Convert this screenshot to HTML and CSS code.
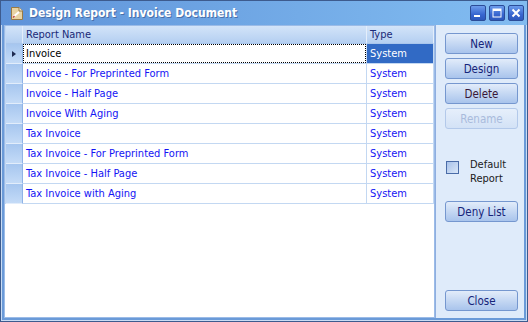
FILE: index.html
```html
<!DOCTYPE html>
<html>
<head>
<meta charset="utf-8">
<link rel="stylesheet" href="styles.css">
</head>
<body>
<div class="window">
  <div class="titlebar">
    <svg class="appicon" width="14" height="15" viewBox="0 0 14 15">
      <path d="M1.5 1.5 H9 L12.5 5 V13.5 H1.5 Z" fill="#e8d3a4" stroke="#9a7a44"/>
      <path d="M9 1.5 V5 H12.5" fill="#f6ead0" stroke="#9a7a44"/>
      <path d="M3 11 L9 6" stroke="#ffffff" stroke-width="2"/>
      <path d="M3 11.5 L4.5 10" stroke="#c04040" stroke-width="1.5"/>
    </svg>
    <span class="title">Design Report - Invoice Document</span>
    <div class="wbtns">
      <div class="wbtn"><svg width="16" height="16" viewBox="0 0 16 16"><rect x="4" y="10" width="6" height="2" fill="#fff"/></svg></div>
      <div class="wbtn"><svg width="16" height="16" viewBox="0 0 16 16"><rect x="4" y="4" width="8" height="8" fill="none" stroke="#fff" stroke-width="1"/><rect x="4" y="4" width="8" height="2" fill="#fff"/></svg></div>
      <div class="wbtn"><svg width="16" height="16" viewBox="0 0 16 16"><path d="M4.5 4.5 L11.5 11.5 M11.5 4.5 L4.5 11.5" stroke="#fff" stroke-width="2"/></svg></div>
    </div>
  </div>
  <div class="client">
    <div class="gridpane">
      <div class="grid">
        <div class="row head">
          <div class="cell rh"></div>
          <div class="cell name">Report Name</div>
          <div class="cell type">Type</div>
        </div>
        <div class="row current">
          <div class="cell rh"><span class="arrow"></span></div>
          <div class="cell name"><span class="focus">Invoice</span></div>
          <div class="cell type sel">System</div>
        </div>
        <div class="row">
          <div class="cell rh"></div>
          <div class="cell name">Invoice - For Preprinted Form</div>
          <div class="cell type">System</div>
        </div>
        <div class="row">
          <div class="cell rh"></div>
          <div class="cell name">Invoice - Half Page</div>
          <div class="cell type">System</div>
        </div>
        <div class="row">
          <div class="cell rh"></div>
          <div class="cell name">Invoice With Aging</div>
          <div class="cell type">System</div>
        </div>
        <div class="row">
          <div class="cell rh"></div>
          <div class="cell name">Tax Invoice</div>
          <div class="cell type">System</div>
        </div>
        <div class="row">
          <div class="cell rh"></div>
          <div class="cell name">Tax Invoice - For Preprinted Form</div>
          <div class="cell type">System</div>
        </div>
        <div class="row">
          <div class="cell rh"></div>
          <div class="cell name">Tax Invoice - Half Page</div>
          <div class="cell type">System</div>
        </div>
        <div class="row">
          <div class="cell rh"></div>
          <div class="cell name">Tax Invoice with Aging</div>
          <div class="cell type">System</div>
        </div>
      </div>
    </div>
    <div class="side">
      <div class="btns">
        <div class="btn">New</div>
        <div class="btn">Design</div>
        <div class="btn dark">Delete</div>
        <div class="btn disabled">Rename</div>
      </div>
      <div class="check">
        <span class="box"></span>
        <span class="label">Default<br>Report</span>
      </div>
      <div class="btn">Deny List</div>
      <div class="spacer"></div>
      <div class="btn">Close</div>
    </div>
  </div>
</div>
</body>
</html>
```

FILE: styles.css
```css
* { box-sizing: border-box; }
html, body { margin: 0; padding: 0; }
body {
  width: 528px; height: 322px; overflow: hidden;
  font-family: "DejaVu Sans Condensed", "DejaVu Sans", sans-serif;
  font-size: 11px;
}
.window {
  width: 528px; height: 322px;
  border: 1px solid #3d5b8e;
  box-shadow: inset 0 0 0 1px #c9dcf4;
  background: #6a9ad8;
  display: flex; flex-direction: column;
}
.titlebar {
  height: 24px; flex: none;
  background: linear-gradient(to right, #5f93d9, #7db7ee 85%, #82bbf0);
  display: flex; align-items: center;
  padding-left: 9px;
}
.appicon { flex: none; margin-top: 1px; }
.title {
  margin-left: 5px;
  color: #fff; font-weight: bold; font-size: 12px;
  font-family: "DejaVu Sans Condensed", "DejaVu Sans", sans-serif;
  text-shadow: 1px 1px 0 #4a6fa8;
}
.wbtns { margin-left: auto; margin-right: 3px; display: flex; gap: 3px; }
.wbtn {
  width: 16px; height: 16px;
  border: 1px solid #2b4c98; border-radius: 2px;
  background: linear-gradient(#6c9cec, #3866d0 60%, #2c58bc);
  display: flex;
}
.wbtn svg { margin: -1px; }
.client {
  flex: 1; display: flex;
  margin: 0 3px 3px 3px;
}
.gridpane {
  width: 431px; flex: none;
  background: #fff;
  border: 1px solid #9bbbe7;
}
.grid { border-left: 1px solid #c3d8f2; }
.row { display: flex; height: 20px; color: #1414f4; }
.row.head { height: 18px; color: #1a2a78; }
.cell {
  border-right: 1px solid #c3d8f2;
  border-bottom: 1px solid #c3d8f2;
  display: flex; align-items: center;
  padding-left: 3px; white-space: nowrap;
}
.head .cell { background: linear-gradient(#d3e4f9, #b4cff1); border-color: #e4eefb; border-bottom-color: #a9c6ec; }
.rh {
  width: 17px; padding: 0;
  background: linear-gradient(#a6c6ef, #c4dbf7);
  border-bottom-color: #e2edfb; border-right-color: #8fb3e6;
}
.head .rh { border-right-color: #e4eefb; }
.name { width: 344px; }
.type { width: 67px; padding-left: 3px; }
.current .name { color: #000; padding: 0; }
.focus {
  display: flex; align-items: center;
  width: 100%; height: 100%;
  padding-left: 3px;
  outline: 1px dotted #000; outline-offset: -1px;
}
.sel { background: #316ac5; color: #fff; }
.arrow {
  width: 0; height: 0; margin-left: 6px;
  border-top: 3.5px solid transparent; border-bottom: 3.5px solid transparent;
  border-left: 4px solid #1e2a50;
}
.side {
  flex: 1;
  background: #dfebfa;
  border-left: 1px solid #8eaee0;
  display: flex; flex-direction: column;
  padding: 8px 0 7px 9px;
}
.btns { display: flex; flex-direction: column; gap: 4px; }
.btn {
  width: 73px; height: 21px;
  border: 1px solid #7597cf; border-radius: 3px;
  background: linear-gradient(#e2ecfa, #c5d8f3 50%, #a9c4ec);
  color: #15247a;
  display: flex; align-items: center; justify-content: center;
  font-size: 11.5px;
}
.btn.dark { color: #3a1838; }
.btn.disabled { color: #a9bbdc; border-color: #b3c9ea; background: linear-gradient(#e6effb, #d3e2f6); }
.check { display: flex; margin-top: 29px; margin-bottom: 15px; }
.box {
  width: 13px; height: 13px; margin: 3px 0 0 1px;
  border: 1px solid #4a6ca8;
  background: linear-gradient(135deg, #a8c2ea, #dae7f8);
}
.label { margin-left: 11px; line-height: 14px; color: #202020; }
.spacer { flex: 1; }
```
